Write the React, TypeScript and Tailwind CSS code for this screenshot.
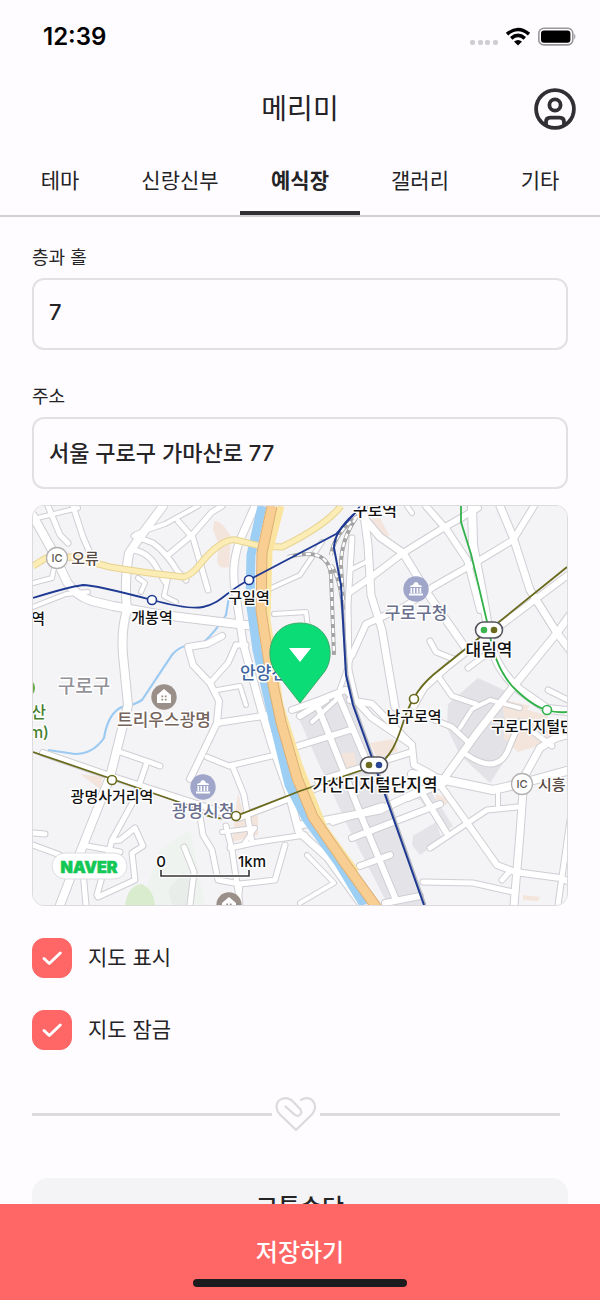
import { useState } from "react";

const TABS = ["테마", "신랑신부", "예식장", "갤러리", "기타"];

// [path, width]
const ROADS: [string, number][] = [
  ["M33 516L52 550L67 582Q76 596 92 601L113 606L163 615L262 627", 8],
  ["M163 506L140 537L129 553Q124 580 127 610Q121 630 123 655L128 705L110 777L80 853L60 905", 8],
  ["M255 506L240 540Q230 566 236 595L243 643L262 712L272 745L288 790L299 832L328 858L362 905", 7],
  ["M134 536L153 543Q166 552 178 572L186 580", 5],
  ["M130 550Q148 550 158 570L165 582", 5],
  ["M167 556L192 535L212 512L222 506", 5],
  ["M178 521L193 538L208 590", 5],
  ["M136 534L165 524L198 506", 4],
  ["M73 506L83 537L94 562", 5],
  ["M48 506L60 535L68 543", 5],
  ["M33 519L78 508", 4],
  ["M33 583L52 578L54 568", 4],
  ["M33 607L66 594L88 592", 4],
  ["M141 592L145 583L138 578", 4],
  ["M168 578L164 596L176 602", 4],
  ["M222 636L207 644L188 647L193 665L210 683L219 701L217 723L190 779", 6],
  ["M236 645L228 663L210 683", 5],
  ["M236 645L246 645", 5],
  ["M217 690L240 686L246 705", 4],
  ["M217 723L276 714", 6],
  ["M207 757L229 766L288 752", 5],
  ["M232 765L244 795L252 842", 5],
  ["M120 752L152 763L160 766", 5],
  ["M146 765L134 800L112 840L97 895", 5],
  ["M112 841L120 840L135 828L143 846L132 853L135 880L98 897", 5],
  ["M82 845L120 852", 5],
  ["M82 860L86 905", 5],
  ["M33 833L45 834", 5],
  ["M33 845L60 855", 5],
  ["M43 753L110 776L200 805L238 818L330 783", 6],
  ["M200 816L203 835L212 850L218 880L240 884L238 905", 5],
  ["M226 826L232 850L240 905", 5],
  ["M184 847L194 872L190 905", 5],
  ["M230 848L258 842L305 835", 5],
  ["M222 832L255 828L243 845", 4],
  ["M240 884L275 880L285 845", 5],
  ["M300 825L380 810L443 780L477 733L513 687L557 633L570 615", 7],
  ["M267 590L300 575L322 542", 4],
  ["M274 614L306 612L311 650", 4],
  ["M350 570L370 560", 4],
  ["M352 538L348 605L349 670L356 700", 5],
  ["M350 592L370 578L403 553L440 530L478 508", 6],
  ["M363 506L368 545L371 595L382 630L395 707", 7],
  ["M363 517L380 537L403 553L430 597L467 650", 7],
  ["M352 655L366 624L404 607L433 587L480 560L513 540L534 506", 6],
  ["M352 655L336 700L312 722", 4],
  ["M426 506L447 530L467 560L480 610", 6],
  ["M472 506L473 545L482 592L491 645Q498 672 520 690L547 709L568 711", 8],
  ["M500 506L513 537L530 590L557 633L570 650", 7],
  ["M442 528L462 518", 5],
  ["M407 506L412 513", 4],
  ["M414 706L424 688L447 667L488 635L568 575", 6],
  ["M430 641L436 652L456 660", 5],
  ["M468 668L492 650", 5],
  ["M438 676L452 696L476 704", 5],
  ["M548 690L570 701", 5],
  ["M350 700L372 704L412 745L414 765L433 775L463 817L497 865L515 872L560 878L570 882", 6],
  ["M430 718L452 727L468 742", 5],
  ["M412 774L445 780L493 790L523 783L570 770", 8],
  ["M560 735L540 748L524 777L520 833L514 905", 7],
  ["M430 848L487 810L517 807", 5],
  ["M498 790L498 806", 4],
  ["M423 882L473 883L513 892", 5],
  ["M467 755Q500 777 510 745L520 722L552 746", 5],
  ["M460 728L472 709L490 700L520 708", 4],
  ["M502 880L511 870", 5],
  ["M570 820L558 905", 5],
  ["M570 735L545 742", 5],
  ["M307 855L334 883L300 903", 4],
];

const PARK_ROADS = [
  "M292 710L320 700L345 690",
  "M316 702L344 772L362 818L396 900",
  "M338 694L366 760",
  "M298 746L350 730",
  "M318 781L412 752",
  "M326 700L300 716",
  "M333 822L382 806",
  "M352 838L440 804",
  "M360 866L390 855",
  "M385 903L420 896",
  "M408 798L444 783",
  "M424 796L446 832",
  "M346 690L372 718L412 745",
];

const LABEL = { fontWeight: 500, paintOrder: "stroke", strokeLinejoin: "round" } as const;

function Label({
  x,
  y,
  size = 16,
  fill = "#111",
  anchor = "middle",
  children,
}: {
  x: number;
  y: number;
  size?: number;
  fill?: string;
  anchor?: "start" | "middle" | "end";
  children: string;
}) {
  return (
    <text x={x} y={y} fontSize={size} fill={fill} textAnchor={anchor} stroke="#fff" strokeWidth="3" {...LABEL}>
      {children}
    </text>
  );
}

function Station({ x, y, color }: { x: number; y: number; color: string }) {
  return <circle cx={x} cy={y} r="4.5" fill="#fff" stroke={color} strokeWidth="1.6" />;
}

function Transfer({ x, y, left, right }: { x: number; y: number; left: string; right: string }) {
  return (
    <g>
      <rect x={x - 13.5} y={y - 8} width="27" height="16" rx="8" fill="#fff" stroke="#55555d" strokeWidth="1.6" />
      <circle cx={x - 5} cy={y} r="3.3" fill={left} />
      <circle cx={x + 5} cy={y} r="3.3" fill={right} />
    </g>
  );
}

function CityHall({ x, y }: { x: number; y: number }) {
  return (
    <g transform={`translate(${x} ${y})`}>
      <circle r="12.7" fill="#9fa6c9" />
      <path d="M-6 -2Q-6 -4 -3 -4Q-2 -7 0 -7Q2 -7 3 -4Q6 -4 6 -2ZM-5.5 -1h1.6v5h-1.6zM-2.6 -1h1.6v5h-1.6zM.6 -1h1.6v5H.6zM3.6 -1h1.6v5H3.6zM-7 4.5H7V6.5H-7z" fill="#fff" />
    </g>
  );
}

function House({ x, y }: { x: number; y: number }) {
  return (
    <g transform={`translate(${x} ${y})`}>
      <circle r="12.7" fill="#9b8f89" />
      <path d="M0 -8L7 -2V6H-7V-2Z" fill="#fff" />
      <path d="M-2.6 -1.5h1.8v1.8h-1.8zM.8 -1.5h1.8V.3H.8zM-2.6 1.8h1.8v1.8h-1.8zM.8 1.8h1.8v1.8H.8z" fill="#9b8f89" />
    </g>
  );
}

function Interchange({ x, y }: { x: number; y: number }) {
  return (
    <g>
      <circle cx={x} cy={y} r="10.5" fill="#fff" stroke="#b5b1b1" strokeWidth="1.3" />
      <text x={x} y={y + 4} fontSize="11" fontWeight="500" fill="#5c5552" textAnchor="middle">
        IC
      </text>
    </g>
  );
}

function VenueMap() {
  return (
    <svg viewBox="33 506 534 399" className="block w-full" role="img" aria-label="예식장 지도">
      <rect x="33" y="506" width="534" height="399" fill="#f4f3f6" />
      <path d="M160 850L190 830L205 905H140Z" fill="#eff3ef" />
      <path d="M125 905Q128 885 142 884Q154 890 155 905Z" fill="#d9edce" />
      <path d="M168 890L184 872L194 890L190 905H172Z" fill="#e8edea" />
      <path d="M296 712L322 700L345 692L366 735L425 905H388L352 835L318 762Z" fill="#e4e3e7" />
      <path d="M448 704L478 678L508 692L515 745L490 783L460 755L447 728Z" fill="#e3e2e6" />
      <path d="M412 798L430 790L453 826L444 832L420 800Z" fill="#e4e3e7" />
      <path d="M413 836L436 822L442 840L420 855L412 845Z" fill="#e4e3e7" />
      <g fill="#f4e5dc">
        <path d="M214 521Q222 520 231 537L229 567Q218 570 217 560L219 545L213 530Z" />
        <path d="M371 519L380 518L389 535L384 542L372 530Z" />
        <path d="M502 702L548 716L550 742L518 752L504 738L505 722Z" />
        <path d="M337 754L354 752L357 768L340 771Z" />
        <path d="M370 743L393 739L398 751L377 758Z" />
        <path d="M436 794L452 800L445 805L436 800Z" />
        <path d="M80 774L103 777L100 789Z" />
        <path d="M238 793L243 812L258 816V835L232 842Z" />
        <path d="M523 895L540 897L538 901L523 900Z" />
        <path d="M506 700L530 706L524 712L503 706Z" />
      </g>

      <path d="M229 597L226 615Q215 632 204 642Q180 644 172 655L142 700Q135 705 122 707Q108 713 104 738Q93 754 75 754L48 750" fill="none" stroke="#9ccaf1" strokeWidth="2.2" />
      <g fill="none" strokeLinejoin="round" strokeLinecap="round">
        {ROADS.map(([d, w]) => (
          <path key={d} d={d} stroke="#cfced3" strokeWidth={w + 2} />
        ))}
        {PARK_ROADS.map((d) => (
          <path key={d} d={d} stroke="#cfced3" strokeWidth="8" />
        ))}
        {ROADS.map(([d, w]) => (
          <path key={d} d={d} stroke="#fff" strokeWidth={w} />
        ))}
        {PARK_ROADS.map((d) => (
          <path key={d} d={d} stroke="#fff" strokeWidth="6" />
        ))}
      </g>

      {/* river and expressways */}
      <g fill="none" strokeLinejoin="round">
        <path d="M262 506L251 555L250 600L257 650L272 715L289 785L306 818L338 862L364 905" stroke="#9ccff3" strokeWidth="9" />
        <path d="M33 566L46 558L72 557L110 567Q145 573 184 577Q192 575 201 563Q222 538 236 540L260 546L282 547Q325 526 341 506" stroke="#e6d391" strokeWidth="7" />
        <path d="M33 566L46 558L72 557L110 567Q145 573 184 577Q192 575 201 563Q222 538 236 540L260 546L282 547Q325 526 341 506" stroke="#fcecb5" strokeWidth="5" />
        <path d="M281 506L269 552L267 620L280 705L299 765L324 828L356 872" stroke="#fbe4a0" strokeWidth="7" />
        <path d="M272 506L262 553L261 610L270 670L281 722L297 778L313 817L344 862L377 908" stroke="#dcb078" strokeWidth="11" />
        <path d="M272 506L262 553L261 610L270 670L281 722L297 778L313 817L344 862L377 908" stroke="#f9ce92" strokeWidth="9" />
      </g>

      {/* railways */}
      <g fill="none">
        <path d="M288 557Q328 546 331 575L334 655M358 516Q335 532 331 555M356 518Q341 540 341 565L343 600M331 565Q341 580 343 610" stroke="#a4a4a4" strokeWidth="4" />
        <path d="M288 557Q328 546 331 575L334 655M358 516Q335 532 331 555M356 518Q341 540 341 565L343 600M331 565Q341 580 343 610" stroke="#fff" strokeWidth="2.4" strokeDasharray="5 4" />
        <path d="M342 600L347 675L354 705L372 755L425 905" stroke="#b4b6c0" strokeWidth="3" />
        <path d="M33 598Q68 587 83 585Q95 585 152 600Q190 610 203 607C222 603 226 591 249 580L336 534L356 512L360 506" stroke="#1f3a93" strokeWidth="1.8" />
        <path d="M354 514Q334 532 334 548L341 585L346 675L353 705L371 755L424 905" stroke="#1f3a93" strokeWidth="2" />
        <path d="M33 752L112 779L190 806Q214 824 236 816L300 791L374 766C392 760 399 735 404 720C409 705 416 690 433 675L489 630L567 567" stroke="#6a6b1e" strokeWidth="1.8" />
        <path d="M461 506V522L471 554L489 630Q495 670 516 690Q534 707 547 710Q556 713 567 712" stroke="#32b24a" strokeWidth="1.8" />
      </g>

      <Station x={152} y={600} color="#1f3a93" />
      <Station x={249} y={580} color="#1f3a93" />
      <Station x={112} y={780} color="#6a6b1e" />
      <Station x={414} y={699} color="#6a6b1e" />
      <Station x={547} y={710} color="#32b24a" />
      <Transfer x={489} y={630} left="#3cb44f" right="#6a6b1e" />
      <Transfer x={374} y={765} left="#6a6b1e" right="#2a4593" />
      <Interchange x={57} y={558} />
      <Interchange x={522} y={784} />
      <CityHall x={416} y={589} />
      <CityHall x={203} y={787} />
      <House x={164} y={697} />
      <House x={229} y={905} />

      <Label x={85} y={564} size={15} fill="#574943">오류</Label>
      <Label x={152} y={623} size={15}>개봉역</Label>
      <Label x={249} y={603} size={15}>구일역</Label>
      <Label x={375} y={516} size={16}>구로역</Label>
      <Label x={45} y={624} size={15} anchor="end">역</Label>
      <Label x={84} y={693} size={19} fill="#929298">구로구</Label>
      <Label x={416} y={619} size={17} fill="#696f8d">구로구청</Label>
      <Label x={489} y={656} size={17}>대림역</Label>
      <Label x={414} y={722} size={15}>남구로역</Label>
      <Label x={491} y={732} size={15} anchor="start">구로디지털단지역</Label>
      <Label x={538} y={790} size={15} fill="#574943" anchor="start">시흥</Label>
      <Label x={375} y={791} size={17}>가산디지털단지역</Label>
      <Label x={164} y={726} size={17} fill="#75645c">트리우스광명</Label>
      <Label x={112} y={802} size={15}>광명사거리역</Label>
      <Label x={203} y={817} size={17} fill="#696f8d">광명시청</Label>
      <Station x={236} y={816} color="#6a6b1e" />
      <Label x={240} y={679} size={17} fill="#3d66a0" anchor="start">안양천</Label>
      <Label x={46} y={718} size={16} fill="#46802f" anchor="end">산</Label>
      <Label x={49} y={738} size={16} fill="#46802f" anchor="end">m)</Label>
      <path d="M33 682Q37 688 33 694Z" fill="#65aa45" />

      {/* venue marker */}
      <path d="M300 703L275 671C264 655 270 623 300 623C330 623 336 655 325 671Z" fill="#0bdc75" stroke="#3caa6b" strokeWidth="1" />
      <path d="M289 648H311L300 662Z" fill="#fff" />

      <rect x="52" y="853" width="75" height="26" rx="13" fill="#fff" stroke="#dddce0" strokeWidth="1" />
      <text x="89" y="873" fontSize="16" textAnchor="middle" fill="#13c755" stroke="#13c755" strokeWidth=".6" className="font-['Inter'] font-black">
        NAVER
      </text>
      <Label x={161} y={867} size={15}>0</Label>
      <Label x={252} y={867} size={15}>1km</Label>
      <path d="M161 870V876H249V870" fill="none" stroke="#fff" strokeWidth="3.5" />
      <path d="M161 870V876H249V870" fill="none" stroke="#333" strokeWidth="1.6" />
    </svg>
  );
}

function StatusBar() {
  return (
    <div className="flex h-[74px] shrink-0 items-center justify-between pr-6 pl-[43px]">
      <span className="font-['Inter'] text-2xl font-semibold text-black">12:39</span>
      <svg width="108" height="24" viewBox="0 0 108 24" aria-hidden="true">
        <g fill="#cfcdd1">
          <rect x="2" y="15" width="5" height="5" rx="2" />
          <rect x="10" y="15" width="5" height="5" rx="2" />
          <rect x="17" y="15" width="5" height="5" rx="2" />
          <rect x="25" y="15" width="5" height="5" rx="2" />
        </g>
        <g fill="none" stroke="#000" strokeWidth="3.6">
          <path d="M39 9.2Q50 -.2 61 9.2" />
          <path d="M43.2 13.4Q50 7.5 56.8 13.4" />
        </g>
        <path d="M46 16.4Q50 13.4 54 16.4L50 20.4Z" fill="#000" />
        <rect x="70.8" y="3.3" width="34" height="16.6" rx="5" fill="none" stroke="#99979c" strokeWidth="1.6" />
        <rect x="73" y="5.5" width="29.4" height="12.2" rx="3" fill="#000" />
        <path d="M106.2 8.5Q108.6 11.5 106.2 14.5Z" fill="#99979c" />
      </svg>
    </div>
  );
}

function ProfileIcon() {
  return (
    <svg width="42" height="42" viewBox="0 0 42 42" fill="none" stroke="#312f33" strokeWidth="3.8" aria-hidden="true">
      <circle cx="21" cy="21" r="18.9" />
      <circle cx="21" cy="17" r="5.6" />
      <path d="M12 37V34Q12 29.6 16.4 29.6H25.6Q30 29.6 30 34V37" />
    </svg>
  );
}

function TextField({ id, label, value, onChange }: { id: string; label: string; value: string; onChange: (v: string) => void }) {
  return (
    <div>
      <label htmlFor={id} className="mb-2 block text-lg leading-6">
        {label}
      </label>
      <input
        id={id}
        type="text"
        value={value}
        onChange={(e) => onChange(e.target.value)}
        className="block h-[72px] w-full rounded-xl border-2 border-[#e2e0e3] bg-transparent px-[15px] pb-1 text-[22px] font-medium outline-none"
      />
    </div>
  );
}

function CheckField({ label, checked, onChange }: { label: string; checked: boolean; onChange: (v: boolean) => void }) {
  return (
    <label className="flex items-center gap-4 text-[21px] leading-10">
      <span className="relative size-10">
        <input
          type="checkbox"
          checked={checked}
          onChange={(e) => onChange(e.target.checked)}
          className="block size-10 appearance-none rounded-xl border border-[#dcdadd] checked:border-[#ff6666] checked:bg-[#ff6666]"
        />
        {checked && (
          <svg viewBox="0 0 40 40" className="pointer-events-none absolute inset-0" fill="none" stroke="#fff" strokeWidth="3" strokeLinecap="round" strokeLinejoin="round" aria-hidden="true">
            <path d="M12 20.5L17.3 25.5L28.3 15" />
          </svg>
        )}
      </span>
      {label}
    </label>
  );
}

function HeartDivider() {
  return (
    <div className="mt-[46px] mr-2 flex h-9 items-center gap-[3px]">
      <span className="h-[3px] flex-1 bg-[#dcdadc]" />
      <svg width="42" height="36" viewBox="0 0 42 36" fill="none" stroke="#dcdadc" strokeWidth="2.2" strokeLinecap="round" strokeLinejoin="round" aria-hidden="true">
        <path d="M10.5 10.5L19.5 18.6C24.5 22 28.3 16.5 24.8 12.8L18 5.5C11.5 -1 1 2.5 1.6 11.5C1.8 14.5 3 16.5 5 18.5L21 34L37.3 18C45 9 35.5 -2.5 26 4" />
      </svg>
      <span className="h-[3px] flex-1 bg-[#dcdadc]" />
    </div>
  );
}

export default function App() {
  const [tab, setTab] = useState("예식장");
  const [hall, setHall] = useState("7");
  const [address, setAddress] = useState("서울 구로구 가마산로 77");
  const [showMap, setShowMap] = useState(true);
  const [lockMap, setLockMap] = useState(true);

  return (
    <div className="flex h-screen flex-col bg-[#fefcff] font-['Inter','Noto_Sans_CJK_KR',sans-serif] text-[#242326]">
      <StatusBar />
      <header className="grid h-[70px] shrink-0 grid-cols-[1fr_auto_1fr] items-center px-6">
        <h1 className="col-start-2 text-[28px] leading-10">메리미</h1>
        <button type="button" aria-label="내 정보" className="justify-self-end">
          <ProfileIcon />
        </button>
      </header>
      <nav className="grid h-[73px] shrink-0 grid-cols-5 border-b-2 border-[#d2d0d3]">
        {TABS.map((name) => (
          <button
            key={name}
            type="button"
            onClick={() => setTab(name)}
            className={
              name === tab
                ? "border-b-4 border-[#312f33] pt-[6px] text-[21px] font-bold"
                : "border-b-4 border-transparent pt-[6px] text-[21px]"
            }
          >
            {name}
          </button>
        ))}
      </nav>

      <main className="min-h-0 flex-1 overflow-y-auto px-8 pt-[29px] [scrollbar-width:none]">
        <div className="flex flex-col gap-[35px]">
          <TextField id="hall" label="층과 홀" value={hall} onChange={setHall} />
          <TextField id="address" label="주소" value={address} onChange={setAddress} />
        </div>
        <div className="mt-4 overflow-hidden rounded-xl border border-[#dcdadd]">
          <VenueMap />
        </div>
        <div className="mt-8 flex flex-col gap-8">
          <CheckField label="지도 표시" checked={showMap} onChange={setShowMap} />
          <CheckField label="지도 잠금" checked={lockMap} onChange={setLockMap} />
        </div>
        <HeartDivider />
        <section className="mt-[46px] rounded-2xl bg-[#f4f3f5] py-3 text-center">
          <h2 className="text-2xl leading-9 font-medium">교통수단</h2>
        </section>
      </main>

      <footer className="relative shrink-0">
        <button type="button" className="h-24 w-full bg-[#ff6666] pt-[2px] text-2xl font-medium text-white">
          저장하기
        </button>
        <span className="absolute bottom-[13px] left-1/2 h-2 w-[214px] -translate-x-1/2 rounded-full bg-[#1c1b1e]" />
      </footer>
    </div>
  );
}
